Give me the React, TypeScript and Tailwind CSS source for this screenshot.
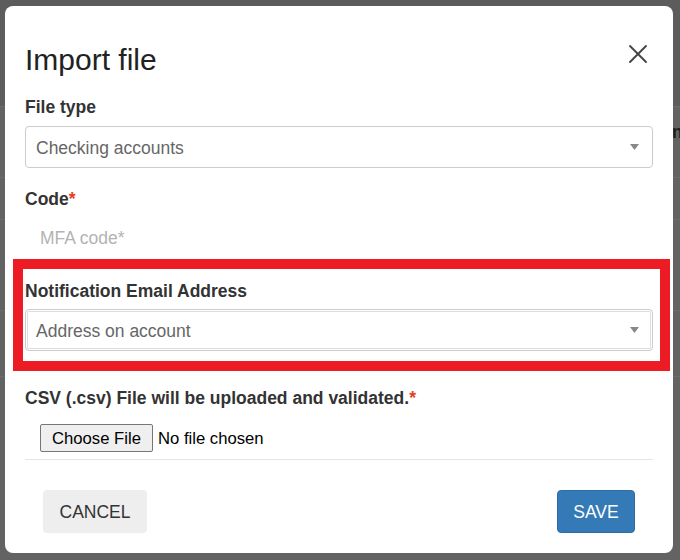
import { X } from "lucide-react";

function Caret() {
  return (
    <svg width="9" height="6" viewBox="0 0 9 6" className="shrink-0">
      <path d="M0 0h9L4.5 6z" fill="#888" />
    </svg>
  );
}

function Label({ text, required }: { text: string; required?: boolean }) {
  return (
    <div className="pt-[2.5px] text-[17.5px] font-bold leading-[25px] text-[#333]">
      {text}
      {required && <span className="text-[#e2401f]">*</span>}
    </div>
  );
}

export default function App() {
  return (
    <div className="relative h-[560px] w-[680px] overflow-hidden bg-[#636363] font-['Liberation_Sans',Arial,sans-serif]">
      {/* page behind the overlay */}
      <div className="flex flex-col">
        <div className="h-[106px] bg-[#5c5c5c]" />
        <div className="flex h-[71px] border-t border-[#6c6c6c]">
          <span className="ml-[672px] mt-[12px] text-[17.5px] font-bold text-[#1e1e1e]">n</span>
        </div>
        <div className="h-[42px] border-t border-[#6c6c6c]" />
        <div className="h-[91px] border-t border-[#6c6c6c]" />
        <div className="h-[66px] border-t border-[#6c6c6c]" />
        <div className="h-[184px] border-t border-[#6c6c6c]" />
      </div>

      <div className="absolute left-[5px] top-[6px] h-[547px] w-[668px] rounded-[8px] bg-white px-[20px] pt-[37px]">
        <div className="flex h-[33px] items-start justify-between">
          <h1 className="text-[30px] font-normal leading-[33px] text-[#222]">Import file</h1>
          <X className="mr-[-1px] mt-[-5px] h-[32px] w-[32px] text-[#444]" strokeWidth={1.4} />
        </div>

        <div className="mt-[16px]">
          <Label text="File type" />
          <div className="mt-[6px] flex h-[42px] items-center justify-between rounded-[4px] border border-[#ccc] pl-[10px] pr-[13px]">
            <span className="pt-[3px] text-[17.5px] text-[#666]">Checking accounts</span>
            <Caret />
          </div>
        </div>

        <div className="mt-[17px]">
          <Label text="Code" required />
          <div className="mt-[3.5px] flex h-[42px] items-center pl-[15px]">
            <span className="pt-[3px] text-[17.5px] text-[#b3b3b3]">MFA code*</span>
          </div>
        </div>

        <div className="ml-[-12px] mr-[-17px] mt-[1px] border-[10px] border-[#ed1c24] pb-[10px] pl-[2px] pr-[7px] pt-[8px]">
          <Label text="Notification Email Address" />
          <div className="mt-[5px] flex h-[42px] items-center justify-between rounded-[4px] border border-[#ccc] pl-[10px] pr-[13px] shadow-[inset_0_0_0_1px_#fff,inset_0_0_0_2px_#ddd]">
            <span className="pt-[3px] text-[17.5px] text-[#666]">Address on account</span>
            <Caret />
          </div>
        </div>

        <div className="mt-[12px]">
          <Label text="CSV (.csv) File will be uploaded and validated." required />
          <div className="ml-[15px] mt-[13px] flex items-center">
            <span className="flex h-[28px] w-[113px] items-center justify-center rounded-[2px] border border-[#767676] bg-[#efefef] pt-[1px] text-[16.67px] text-black">
              Choose File
            </span>
            <span className="ml-[5px] pt-[1px] text-[16.67px] text-black">No file chosen</span>
          </div>
        </div>

        <div className="mt-[7px] h-px bg-[#e5e5e5]" />

        <div className="mx-[18px] mt-[30px] flex justify-between">
          <button className="flex h-[43px] w-[104px] items-center justify-center rounded-[4px] bg-[#eee] pt-[2px] text-[17.5px] text-[#333]">
            CANCEL
          </button>
          <button className="flex h-[43px] w-[78px] items-center justify-center rounded-[4px] border border-[#2e6da4] bg-[#337ab7] pt-[2px] text-[17.5px] text-white">
            SAVE
          </button>
        </div>
      </div>
    </div>
  );
}
